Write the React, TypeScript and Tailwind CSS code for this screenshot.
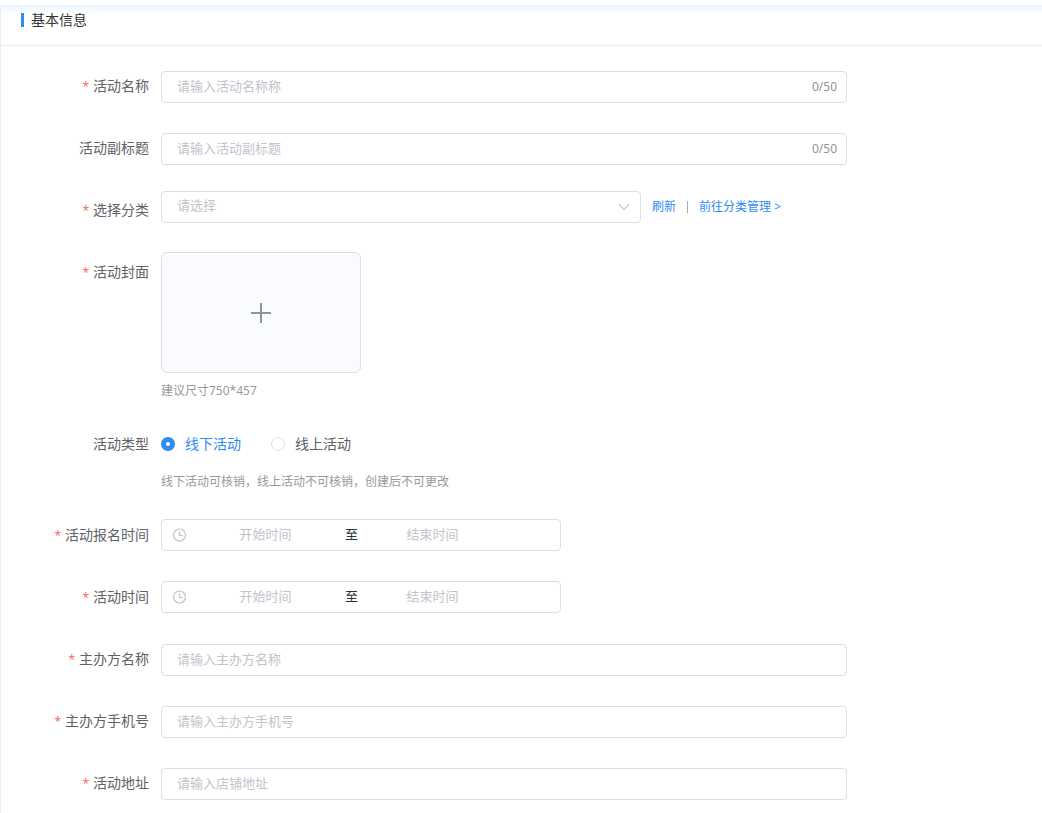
import { useState, type ReactNode } from "react";

type FormRowProps = {
  label: string;
  htmlFor?: string;
  required?: boolean;
  children: ReactNode;
};

function FormRow({ label, htmlFor, required = false, children }: FormRowProps) {
  return (
    <div className="mb-[22px] flex items-start">
      <label
        htmlFor={htmlFor}
        className="w-40 shrink-0 pr-3 text-right text-sm leading-10 text-[#606266]"
      >
        {required ? <span className="mr-1 text-xs text-[#f56c6c]">*</span> : null}
        {label}
      </label>
      <div className="min-w-0 max-w-[686px] flex-1">{children}</div>
    </div>
  );
}

type TextFieldProps = {
  id: string;
  label: string;
  placeholder: string;
  required?: boolean;
  maxLength?: number;
};

function TextField({ id, label, placeholder, required, maxLength }: TextFieldProps) {
  const [value, setValue] = useState("");

  return (
    <FormRow label={label} htmlFor={id} required={required}>
      <div className="flex h-10 items-center pt-0.5">
        <div className="flex h-8 w-full items-center rounded border border-[#dcdfe6] bg-white pr-[9px] focus-within:border-[#2d8cf0]">
          <input
            id={id}
            type="text"
            value={value}
            maxLength={maxLength}
            placeholder={placeholder}
            onChange={(event) => setValue(event.target.value)}
            className="h-full min-w-0 flex-1 bg-transparent pb-0.5 pl-[15px] text-[13px] text-[#606266] outline-none placeholder:text-[#c0c4cc]"
          />
          {maxLength ? (
            <span className="text-xs text-[#909399]">
              {value.length}/{maxLength}
            </span>
          ) : null}
        </div>
      </div>
    </FormRow>
  );
}

function ClockIcon() {
  return (
    <svg viewBox="0 0 16 16" className="mr-1 size-4 shrink-0" fill="none" stroke="#c0c4cc" strokeWidth="1.2" aria-hidden="true">
      <circle cx="7.5" cy="8" r="6" />
      <path d="M7.5 4.5v4h3.5" />
    </svg>
  );
}

function DateRangeField({ id, label }: { id: string; label: string }) {
  const inputClass =
    "h-full min-w-0 flex-1 bg-transparent pb-0.5 text-center text-[13px] text-[#606266] outline-none placeholder:text-[#c0c4cc]";

  return (
    <FormRow label={label} htmlFor={id} required>
      <div className="flex h-10 items-center">
        <div className="flex h-8 w-full max-w-[400px] items-center rounded border border-[#dcdfe6] bg-white pr-[54px] pl-2.5">
          <ClockIcon />
          <input id={id} type="text" placeholder="开始时间" className={inputClass} />
          <span className="w-5 shrink-0 pl-1.5 text-[13px] whitespace-nowrap text-[#303133]">至</span>
          <input type="text" aria-label={label} placeholder="结束时间" className={inputClass} />
        </div>
      </div>
    </FormRow>
  );
}

const activityTypes = [
  { value: "offline", label: "线下活动" },
  { value: "online", label: "线上活动" },
];

export default function App() {
  const [activityType, setActivityType] = useState("offline");

  return (
    <div className="min-h-screen bg-white pt-[5px] font-['Noto_Sans','Noto_Sans_CJK_SC',sans-serif]">
      <main className="min-h-screen border-l border-[#e8edf8]">
        <header className="flex h-[41px] items-start border-b border-[#ebeef0] bg-linear-to-b from-[#ecf5ff] to-white to-20% pt-2 pl-5">
          <h1 className="flex items-center text-sm leading-[14px] text-[#303133]">
            <span className="mr-[7px] h-3.5 w-[3px] bg-[#2d8cf0]" />
            基本信息
          </h1>
        </header>

        <form className="pt-5" onSubmit={(event) => event.preventDefault()}>
          <TextField id="name" label="活动名称" placeholder="请输入活动名称称" maxLength={50} required />
          <TextField id="subtitle" label="活动副标题" placeholder="请输入活动副标题" maxLength={50} />

          <FormRow label="选择分类" htmlFor="category" required>
            <div className="flex h-10 items-start pt-px text-xs">
              <div className="grid w-full max-w-[480px]">
                <select
                  id="category"
                  className="col-start-1 row-start-1 h-8 w-full appearance-none rounded border border-[#dcdfe6] bg-white pb-0.5 pl-[15px] text-[13px] text-[#c0c4cc] outline-none"
                >
                  <option value="">请选择</option>
                </select>
                <svg
                  viewBox="0 0 12 12"
                  className="pointer-events-none col-start-1 row-start-1 mr-[11px] size-3 self-center justify-self-end"
                  fill="none"
                  stroke="#c0c4cc"
                  strokeWidth="1.2"
                  aria-hidden="true"
                >
                  <path d="M.8 3.2 6 8.4l5.2-5.2" />
                </svg>
              </div>
              <div className="ml-[11px] flex h-8 shrink-0 items-center gap-[11px] text-[#2d8cf0]">
                <button type="button">刷新</button>
                <span className="h-3 w-px bg-[#aaaaaa]" />
                <a href="#category">前往分类管理 &gt;</a>
              </div>
            </div>
          </FormRow>

          <FormRow label="活动封面" htmlFor="cover" required>
            <button
              id="cover"
              type="button"
              aria-label="活动封面"
              className="flex h-[121px] w-[200px] items-center justify-center rounded-md border border-[#dcdfe6] bg-[#fafbff]"
            >
              <svg viewBox="0 0 20 20" className="size-5" stroke="#8c939d" strokeWidth="2" aria-hidden="true">
                <path d="M0 10h20M10 0v20" />
              </svg>
            </button>
            <p className="pt-[9px] pb-0.5 text-xs leading-[18px] text-[#999999]">建议尺寸750*457</p>
          </FormRow>

          <FormRow label="活动类型">
            <div className="flex h-10 items-center gap-[30px]">
              {activityTypes.map((type) => (
                <label key={type.value} className="flex items-center text-sm text-[#606266] has-checked:text-[#2d8cf0]">
                  <input
                    type="radio"
                    name="activityType"
                    value={type.value}
                    checked={activityType === type.value}
                    onChange={() => setActivityType(type.value)}
                    className="mr-2.5 size-3.5 appearance-none rounded-full border border-[#dcdfe6] bg-white checked:border-5 checked:border-[#2d8cf0]"
                  />
                  {type.label}
                </label>
              ))}
            </div>
            <p className="pt-[9px] pb-0.5 text-xs leading-[18px] text-[#999999]">
              线下活动可核销，线上活动不可核销，创建后不可更改
            </p>
          </FormRow>

          <DateRangeField id="signupTime" label="活动报名时间" />
          <DateRangeField id="activityTime" label="活动时间" />

          <TextField id="organizer" label="主办方名称" placeholder="请输入主办方名称" required />
          <TextField id="phone" label="主办方手机号" placeholder="请输入主办方手机号" required />
          <TextField id="address" label="活动地址" placeholder="请输入店铺地址" required />
        </form>
      </main>
    </div>
  );
}
